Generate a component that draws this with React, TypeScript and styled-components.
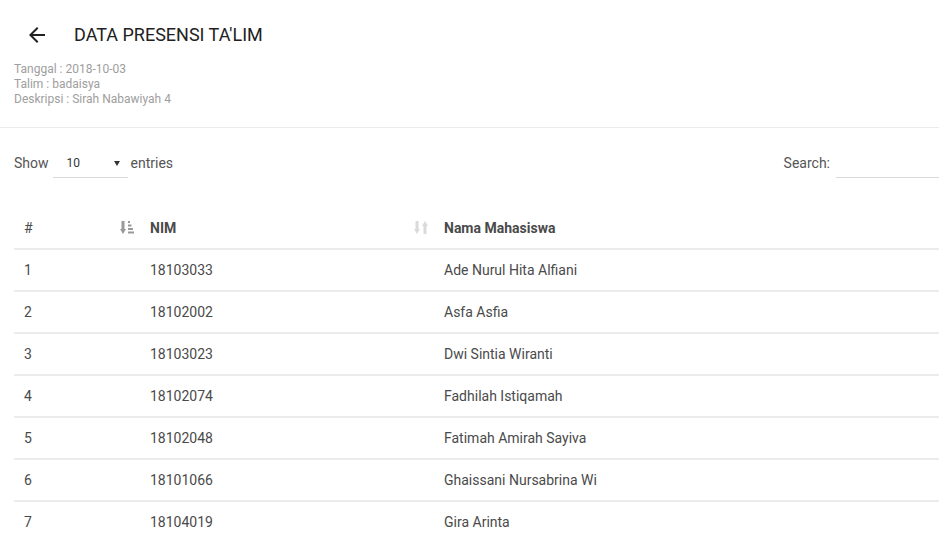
import React from "react";
import styled, { createGlobalStyle } from "styled-components";

const GlobalStyle = createGlobalStyle`
  html, body { margin: 0; padding: 0; background: #fff; }
  body { font-family: Roboto, "Noto Sans", Arial, sans-serif; overflow: hidden; }
  * { box-sizing: border-box; }
`;

const Page = styled.div`
  width: 939px;
  min-height: 538px;
  background: #fff;
`;

const TopBar = styled.header`
  display: flex;
  align-items: center;
  gap: 25px;
  padding: 23px 0 0 25px;
  height: 47px;
`;

const BackButton = styled.button`
  display: flex;
  align-items: center;
  justify-content: center;
  width: 24px;
  height: 24px;
  padding: 0;
  border: none;
  background: none;
  color: #212121;
  cursor: pointer;
`;

const Title = styled.h1`
  margin: 0;
  font-size: 18px;
  font-weight: 400;
  line-height: 24px;
  color: #212121;
`;

const Info = styled.div`
  padding: 15px 14px 20px;
  border-bottom: 1px solid #ebebeb;
`;

const InfoLine = styled.div`
  font-size: 12px;
  line-height: 15px;
  color: #9e9e9e;
`;

const Content = styled.div`
  padding: 19px 0 0 14px;
`;

const Controls = styled.div`
  display: flex;
  justify-content: space-between;
  align-items: center;
  height: 31px;
`;

const Label = styled.label`
  display: flex;
  align-items: center;
  gap: 4px;
  font-size: 14px;
  color: #555;
`;

const SelectBox = styled.div`
  display: flex;
  align-items: center;
  justify-content: space-between;
  width: 75px;
  height: 30px;
  padding: 2px 8px 0 14px;
  margin-right: -1px;
  border-bottom: 1px solid #d9d9d9;
  font-size: 12px;
  color: #333;
`;

const Caret = styled.span`
  width: 0;
  height: 0;
  border-left: 3px solid transparent;
  border-right: 3px solid transparent;
  border-top: 5px solid #333;
`;

const SearchInput = styled.input`
  width: 103px;
  height: 30px;
  margin-left: 2px;
  border: none;
  border-bottom: 1px solid #d9d9d9;
  outline: none;
  font: inherit;
`;

const Table = styled.table`
  width: 925px;
  margin-top: 29px;
  border-collapse: collapse;
  table-layout: fixed;
  font-size: 14px;
  color: #4a4a4a;
`;

const Th = styled.th<{ $w?: number }>`
  width: ${(p) => (p.$w ? `${p.$w}px` : "auto")};
  height: 42px;
  padding: 0 6px 0 10px;
  text-align: left;
  font-weight: 700;
  color: #4a4a4a;
  border-bottom: 2px solid #ebebeb;
`;

const ThInner = styled.div<{ $hash?: boolean }>`
  display: flex;
  align-items: center;
  justify-content: space-between;
  font-weight: ${(p) => (p.$hash ? 400 : 700)};
`;

const Td = styled.td`
  height: 42px;
  padding: 0 10px;
  line-height: 20px;
  border-bottom: 2px solid #ebebeb;
`;

const SortAsc = () => (
  <svg width="14" height="15" viewBox="0 0 14 15" fill="#999">
    <rect x="1.5" y="1" width="3" height="9" />
    <polygon points="0,9 6,9 3,14" />
    <rect x="8" y="1" width="2" height="2" />
    <rect x="8" y="4.5" width="3.5" height="2" />
    <rect x="8" y="8" width="5" height="2" />
    <rect x="8" y="11.5" width="6" height="2" />
  </svg>
);

const SortBoth = () => (
  <svg width="14" height="15" viewBox="0 0 14 15" fill="#dadada">
    <rect x="1.5" y="1" width="3" height="9" />
    <polygon points="0,9 6,9 3,14" />
    <rect x="9.5" y="5" width="3" height="9" />
    <polygon points="8,6 14,6 11,1" />
  </svg>
);

const rows = [
  ["1", "18103033", "Ade Nurul Hita Alfiani"],
  ["2", "18102002", "Asfa Asfia"],
  ["3", "18103023", "Dwi Sintia Wiranti"],
  ["4", "18102074", "Fadhilah Istiqamah"],
  ["5", "18102048", "Fatimah Amirah Sayiva"],
  ["6", "18101066", "Ghaissani Nursabrina Wi"],
  ["7", "18104019", "Gira Arinta"],
];

export default function App() {
  return (
    <Page>
      <GlobalStyle />
      <TopBar>
        <BackButton aria-label="Kembali">
          <svg width="24" height="24" viewBox="0 0 24 24" fill="currentColor">
            <path d="M20 11H7.83l5.59-5.59L12 4l-8 8 8 8 1.41-1.41L7.83 13H20v-2z" />
          </svg>
        </BackButton>
        <Title>DATA PRESENSI TA'LIM</Title>
      </TopBar>
      <Info>
        <InfoLine>Tanggal : 2018-10-03</InfoLine>
        <InfoLine>Talim : badaisya</InfoLine>
        <InfoLine>Deskripsi : Sirah Nabawiyah 4</InfoLine>
      </Info>
      <Content>
        <Controls>
          <Label>
            Show
            <SelectBox>
              <span>10</span>
              <Caret />
            </SelectBox>
            entries
          </Label>
          <Label>
            Search:
            <SearchInput type="search" />
          </Label>
        </Controls>
        <Table>
          <thead>
            <tr>
              <Th $w={126}>
                <ThInner $hash>
                  <span>#</span>
                  <SortAsc />
                </ThInner>
              </Th>
              <Th $w={294}>
                <ThInner>
                  <span>NIM</span>
                  <SortBoth />
                </ThInner>
              </Th>
              <Th>
                <ThInner>
                  <span>Nama Mahasiswa</span>
                </ThInner>
              </Th>
            </tr>
          </thead>
          <tbody>
            {rows.map((r) => (
              <tr key={r[0]}>
                <Td>{r[0]}</Td>
                <Td>{r[1]}</Td>
                <Td>{r[2]}</Td>
              </tr>
            ))}
          </tbody>
        </Table>
      </Content>
    </Page>
  );
}
